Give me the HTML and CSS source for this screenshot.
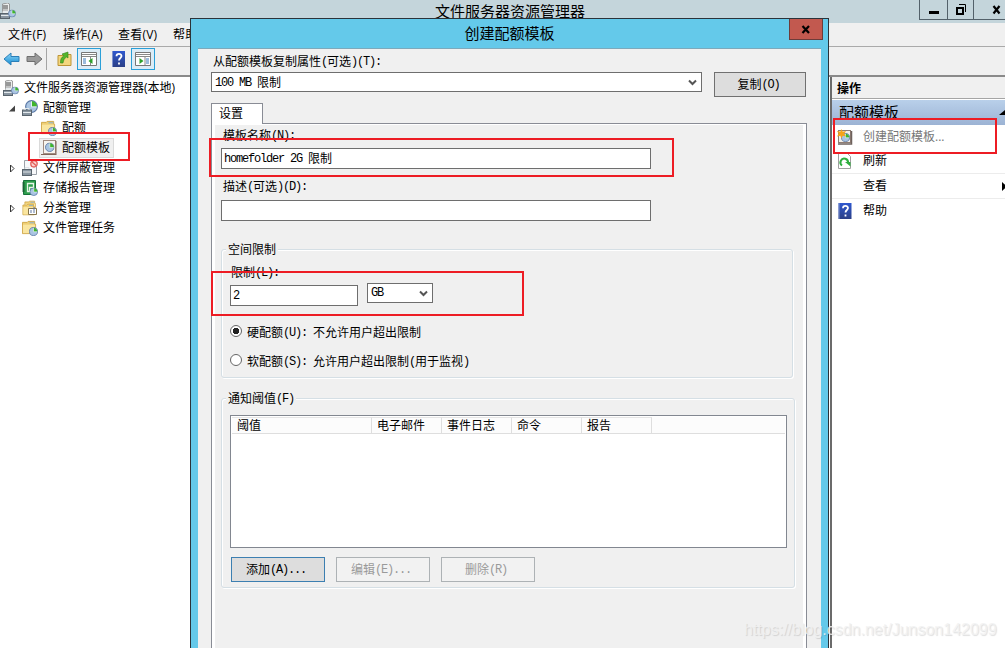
FILE: index.html
```html
<!DOCTYPE html>
<html lang="zh-CN">
<head>
    <meta charset="UTF-8">
    <title>文件服务器资源管理器</title>
    <link rel="stylesheet" href="styles.css">
</head>
<body>
    <svg class="sprites" width="0" height="0">
        <defs>
            <linearGradient id="gBlue" x1="0" y1="0" x2="0" y2="1"><stop offset="0" stop-color="#8fd6f7"/><stop offset="1" stop-color="#138bd2"/></linearGradient>
            <linearGradient id="gHelp" x1="0" y1="0" x2="0" y2="1"><stop offset="0" stop-color="#2f58cf"/><stop offset="1" stop-color="#2b3f86"/></linearGradient>
            <symbol id="pie" viewBox="0 0 10 10">
                <circle cx="5" cy="5" r="4.5" fill="#a9c4e2" stroke="#5a78a5" stroke-width=".9"/>
                <path d="M5 5.200V.8A4.200 4.200 0 0 1 9.200 5.200z" fill="#3fb52c"/>
                <path d="M5 1v4.300h4" stroke="#eef6fc" stroke-width=".7" fill="none"/>
            </symbol>
            <symbol id="server" viewBox="0 0 16 16">
                <path d="M2.500 1l5-1 2 1v10h-7z" fill="#eceeee" stroke="#888" stroke-width=".8"/>
                <path d="M3 3h5M3 5h5" stroke="#444"/>
                <path d="M3 7h5" stroke="#999"/>
                <rect x=".5" y="10.500" width="9" height="5" fill="#8a96a1" stroke="#59646d"/>
                <path d="M3 10V8.500h4V10M1 12.500h8" stroke="#e4eaed" fill="none"/>
                <use href="#pie" x="8" y="6.500" width="8" height="8"/>
            </symbol>
            <symbol id="quota" viewBox="0 0 16 16">
                <use href="#pie" x="3" y="0" width="13" height="13"/>
                <rect x=".5" y="10" width="9" height="5.500" fill="#8a96a1" stroke="#59646d"/>
                <path d="M3 10V8.500h4V10M1 12.500h8" stroke="#e4eaed" fill="none"/>
            </symbol>
            <symbol id="folder" viewBox="0 0 16 16">
                <path d="M.5 2.500h5l1-1h7v3h1v10H.5z" fill="#efcf74" stroke="#cfa649"/>
                <path d="M8 3h5" stroke="#7eaed8"/>
                <path d="M1 5h13v9H1z" fill="#fae6a0"/>
            </symbol>
            <symbol id="folderpie" viewBox="0 0 16 16">
                <use href="#folder" width="15" height="15"/>
                <use href="#pie" x="7" y="7" width="9" height="9"/>
            </symbol>
            <symbol id="template" viewBox="0 0 16 16">
                <rect x="2.500" y=".5" width="12" height="13" fill="#f7f4ef" stroke="#a18c82"/>
                <path d="M0 14.500h15M15 1v14" stroke="#80665a" fill="none"/>
                <use href="#pie" x="4" y="2.500" width="9.500" height="9.500"/>
            </symbol>
            <symbol id="screen" viewBox="0 0 16 16">
                <path d="M2.500.5h9l3 3v11h-12z" fill="#f7f8fa" stroke="#9ba1a8"/>
                <rect x=".5" y="9.500" width="9" height="6" fill="#8a96a1" stroke="#59646d"/>
                <path d="M3 9V7.500h4V9M1 12h8" stroke="#dde3e6" fill="none"/>
                <circle cx="12" cy="3.800" r="3.200" fill="#f9d4d1" stroke="#e2605b" stroke-width="1.300"/>
                <path d="M9.700 1.800l4.600 4" stroke="#e2605b" stroke-width="1.300"/>
            </symbol>
            <symbol id="report" viewBox="0 0 16 16">
                <path d="M1.500.5h12v14h-12z" fill="#2f9f4e" stroke="#17733a"/>
                <path d="M0 3h3M0 5h3M0 7h3M0 9h3M0 11h3" stroke="#174f2b" stroke-width=".8"/>
                <path d="M5.500 3.500h6v4h-4v4h-2z" fill="none" stroke="#e8f6e8" stroke-width="1.300"/>
                <use href="#pie" x="7.500" y="7.500" width="8.500" height="8.500"/>
            </symbol>
            <symbol id="classes" viewBox="0 0 16 16">
                <use href="#folder" x="2" y="0" width="13" height="12"/>
                <use href="#folder" x="0" y="3" width="14" height="13"/>
                <path d="M6.500 8.500h8v6h-8z" fill="#fff" stroke="#85754d"/>
                <path d="M9 10v3M12 7v6" stroke="#5e79a3"/>
            </symbol>
            <symbol id="create" viewBox="0 0 16 16">
                <rect x="1.500" y="1.500" width="12" height="12" fill="#f2eee8" stroke="#8f7d73"/>
                <path d="M1 15h13.500V2" stroke="#6e625d" stroke-width="1.500" fill="none"/>
                <use href="#pie" x="4" y="4" width="9" height="9"/>
                <path d="M4.500 0l1.200 2.800L9 2 7.300 4.700 9 7.500 5.700 6.800 4.500 9.500 3.300 6.800 0 7.500l1.700-2.800L0 2l3.300.8z" fill="#f5a31a"/>
            </symbol>
            <symbol id="refresh" viewBox="0 0 16 16">
                <path d="M1.500.5h9l3 3v12h-12z" fill="#fff" stroke="#a0a0a0"/>
                <path d="M5 12.500A3.800 3.800 0 1 1 11 10" stroke="#2fae3f" stroke-width="2" fill="none"/>
                <path d="M8 9h5.500v4.500z" fill="#2fae3f"/>
            </symbol>
        </defs>
    </svg>

    <div class="window">
        <header class="titlebar">
            <svg class="app-icon"><use href="#server"/></svg>
            <span class="title">文件服务器资源管理器</span>
            <div class="win-buttons">
                <span><svg width="12" height="12"><path d="M1 8.500h10" stroke="#000" stroke-width="3"/></svg></span>
                <span><svg width="12" height="12"><path d="M2 4h6v6H2z" stroke="#000" stroke-width="2" fill="none"/><path d="M4 .5h6.500V8" stroke="#000" fill="none"/></svg></span>
                <span><svg width="10" height="10"><path d="M1.500 1l6 7.500M7.500 1l-6 7.500" stroke="#000" stroke-width="2.200"/></svg></span>
            </div>
        </header>
        <nav class="menu">
            <span>文件(F)</span><span>操作(A)</span><span>查看(V)</span><span>帮助(H)</span>
        </nav>
        <div class="toolbar">
            <svg width="17" height="16"><path d="M1 8l7-6v3.500h8v5H8V14z" fill="url(#gBlue)" stroke="#2b7fb8"/></svg>
            <svg class="fwd" width="17" height="16"><path d="M16 8L9 2v3.500H1v5h8V14z" fill="#999" stroke="#6f6f6f"/></svg>
            <i class="sep"></i>
            <svg class="up" width="16" height="16"><path d="M1 4.500h5l1-1h7v11H1z" fill="#f3d67e" stroke="#bd9437"/><path d="M3.500 12c0-5 1.500-6 3.500-7L5 3l6-2v6L9.500 6C7.500 7 6.500 9 6 12z" fill="#54b52b" stroke="#348519" stroke-width=".6"/></svg>
            <span class="tool-on">
                <svg width="16" height="14"><path d="M.5.5h15v13H.5z" fill="#fff" stroke="#777"/><path d="M1 2.500h14M1 4.500h14M9.500 5v8" stroke="#888"/><path d="M2 7h3M2 9h3M2 11h3" stroke="#3679ba"/><path d="M11.500 6v6L7.500 9z" fill="#2da22c"/></svg>
            </span>
            <svg class="help" width="13" height="16"><path d="M0 0h13v16H0z" fill="url(#gHelp)"/><path d="M.5 0v16" stroke="#8093cc"/><path d="M4.500 5.200c0-3 5-3 5-.2 0 2-2.500 2-2.500 4.500M7 11.500v2" stroke="#fff" stroke-width="1.800" fill="none"/></svg>
            <span class="tool-on">
                <svg width="16" height="14"><path d="M.5.5h15v13H.5z" fill="#fff" stroke="#777"/><path d="M1 2.500h14M1 4.500h14M10 5v8" stroke="#888"/><path d="M11 7h3M11 9h3M11 11h3" stroke="#3679ba"/><path d="M4.500 6v6l4-3z" fill="#2da22c"/></svg>
            </span>
        </div>

        <main class="panes">
            <div class="tree">
                <div class="node root"><svg class="ico"><use href="#server"/></svg><span>文件服务器资源管理器(本地)</span></div>
                <div class="node"><svg class="arrow" viewBox="0 0 8 8"><path d="M7 1v6H1z" fill="#444"/></svg><svg class="ico"><use href="#quota"/></svg><span>配额管理</span></div>
                <div class="node sub"><svg class="ico"><use href="#folderpie"/></svg><span>配额</span></div>
                <div class="node sub selected"><svg class="ico"><use href="#template"/></svg><span>配额模板</span></div>
                <div class="node"><svg class="arrow" viewBox="0 0 8 8"><path d="M2.500.5v7L6 4z" fill="none" stroke="#333"/></svg><svg class="ico"><use href="#screen"/></svg><span>文件屏蔽管理</span></div>
                <div class="node"><i class="arrow"></i><svg class="ico"><use href="#report"/></svg><span>存储报告管理</span></div>
                <div class="node"><svg class="arrow" viewBox="0 0 8 8"><path d="M2.500.5v7L6 4z" fill="none" stroke="#333"/></svg><svg class="ico"><use href="#classes"/></svg><span>分类管理</span></div>
                <div class="node"><i class="arrow"></i><svg class="ico"><use href="#folderpie"/></svg><span>文件管理任务</span></div>
            </div>

            <aside class="actions">
                <div class="actions-head">操作</div>
                <div class="actions-group"><span>配额模板</span><svg width="6" height="6"><path d="M6 0v5H0z"/></svg></div>
                <div class="action disabled"><svg class="ico"><use href="#create"/></svg><span>创建配额模板...</span></div>
                <div class="action"><svg class="ico"><use href="#refresh"/></svg><span>刷新</span></div>
                <div class="action lined"><i class="ico"></i><span>查看</span><svg class="more" width="3" height="9"><path d="M0 0l5 4.500L0 9z"/></svg></div>
                <div class="action lined"><svg class="ico" viewBox="0 0 13 16"><path d="M0 0h13v16H0z" fill="url(#gHelp)"/><path d="M.5 0v16" stroke="#8093cc"/><path d="M4.500 5.200c0-3 5-3 5-.2 0 2-2.500 2-2.500 4.500M7 11.500v2" stroke="#fff" stroke-width="1.800" fill="none"/></svg><span>帮助</span></div>
            </aside>
        </main>
    </div>

    <section class="dialog">
        <div class="dialog-title">
            <span>创建配额模板</span>
            <div class="close"><svg width="10" height="9"><path d="M1.500 1l6.500 7M8 1L1.500 8" stroke="#000" stroke-width="2.200"/></svg></div>
        </div>
        <div class="dialog-body">
            <div class="copy-label">从配额模板复制属性<b>(</b>可选<b>)(T):</b></div>
            <div class="copy-row">
                <div class="select wide"><span><b>100 MB </b>限制</span><svg width="9" height="7"><path d="M1 1.500L4.500 5 8 1.500" stroke="#555" stroke-width="2" fill="none"/></svg></div>
                <div class="btn">复制<b>(O)</b></div>
            </div>
            <div class="tab">设置</div>
            <div class="tab-panel">
                <div class="page">
                    <div class="label name">模板名称<b>(N):</b></div>
                    <div class="field"><b>homefolder 2G </b>限制</div>
                    <div class="label desc">描述<b>(</b>可选<b>)(D):</b></div>
                    <div class="field"></div>

                    <fieldset class="space">
                        <legend>空间限制</legend>
                        <div class="limit-label">限制<b>(L):</b></div>
                        <div class="limit-row">
                            <div class="field size"><b>2</b></div>
                            <div class="select unit"><b>GB</b><svg width="9" height="7"><path d="M1 1.500L4.500 5 8 1.500" stroke="#555" stroke-width="2" fill="none"/></svg></div>
                        </div>
                        <div class="radio-row first"><i class="radio on"></i><span>硬配额<b>(U): </b>不允许用户超出限制</span></div>
                        <div class="radio-row"><i class="radio"></i><span>软配额<b>(S): </b>允许用户超出限制<b>(</b>用于监视<b>)</b></span></div>
                    </fieldset>

                    <fieldset class="notify">
                        <legend>通知阈值<b>(F)</b></legend>
                        <div class="list">
                            <div class="list-head">
                                <span class="first">阈值</span><span>电子邮件</span><span>事件日志</span><span>命令</span><span>报告</span>
                            </div>
                        </div>
                        <div class="btn-row">
                            <div class="btn default">添加<b>(A)...</b></div>
                            <div class="btn off">编辑<b>(E)...</b></div>
                            <div class="btn off">删除<b>(R)</b></div>
                        </div>
                    </fieldset>
                </div>
            </div>
        </div>
    </section>

    <div class="mark mark-tree"></div>
    <div class="mark mark-name"></div>
    <div class="mark mark-limit"></div>
    <div class="mark mark-action"></div>
    <div class="watermark">https://blog.csdn.net/Junson142099</div>
</body>
</html>
```
FILE: styles.css
```css
* {
    margin: 0;
    padding: 0;
    box-sizing: border-box;
}

body {
    position: relative;
    width: 1005px;
    height: 648px;
    overflow: hidden;
    background: #fff;
    color: #000;
    font-family: "Open Sans", "Noto Sans CJK SC", sans-serif;
    font-size: 12px;
}

svg {
    display: block;
    flex: none;
}

.sprites {
    position: absolute;
}

/* main window */
.window {
    height: 648px;
    display: flex;
    flex-direction: column;
}

.titlebar {
    height: 23px;
    background: #c4d5db;
    display: flex;
    align-items: flex-start;
}

.app-icon {
    width: 16px;
    height: 16px;
    margin-top: 3px;
}

.title {
    margin-left: 419px;
    font-size: 15px;
    line-height: 23px;
    white-space: nowrap;
}

.win-buttons {
    margin-left: auto;
    width: 86px;
    height: 20px;
    display: flex;
    overflow: hidden;
    border: 1px solid #53616a;
    border-width: 0 0 1px 1px;
}

.win-buttons span {
    flex: none;
    width: 28px;
    display: flex;
    align-items: center;
    justify-content: center;
    border-right: 1px solid #53616a;
}

.win-buttons span:nth-child(2) {
    width: 26px;
}

.win-buttons span:nth-child(3) {
    width: 46px;
    border-right: 0;
}

.menu {
    height: 24px;
    display: flex;
    padding-left: 8px;
    background: #f0f0f0;
    border-bottom: 1px solid #aaa;
    line-height: 24px;
}

.menu span {
    width: 55px;
    letter-spacing: 0.2px;
}

.toolbar {
    height: 30px;
    display: flex;
    align-items: center;
    padding: 0 0 5px 3px;
    background: #f0f0f0;
    border-bottom: 2px solid #8a8a8a;
}

.toolbar .fwd {
    margin-left: 6px;
}

.toolbar .sep {
    width: 1px;
    height: 22px;
    margin-left: 3px;
    background: #a5a5a5;
}

.toolbar .up {
    margin-left: 10px;
}

.tool-on {
    width: 24px;
    height: 22px;
    margin-left: 4px;
    display: flex;
    align-items: center;
    justify-content: center;
    background: #dcecf6;
    border: 1px solid #2a9fd8;
}

.toolbar .help {
    margin-left: 11px;
}

.help + .tool-on {
    margin-left: 6px;
}

.panes {
    flex: 1;
    display: flex;
    justify-content: space-between;
}

.tree {
    width: 190px;
    padding-top: 1px;
}

.node {
    height: 20px;
    display: flex;
    align-items: center;
    padding-left: 8px;
    line-height: 20px;
    white-space: nowrap;
}

.node .ico {
    width: 16px;
    height: 16px;
    margin-right: 5px;
}

.node .arrow {
    width: 8px;
    height: 9px;
    margin-right: 6px;
}

.node.root {
    padding-left: 3px;
}

.node.sub {
    padding-left: 41px;
}

.node.selected {
    margin-left: 39px;
    padding-left: 2px;
    width: 75px;
    background: #f0f0f0;
    border: 1px solid #dadada;
}

.node.selected .ico {
    margin-left: -1px;
}

.actions {
    width: 175px;
    border-left: 2px solid #6b6b6b;
}

.actions-head {
    height: 22px;
    padding-left: 5px;
    background: #f0f0f0;
    border-bottom: 1px solid #a5a5a5;
    font-weight: bold;
    line-height: 23px;
}

.actions-group {
    height: 25px;
    margin-top: 1px;
    display: flex;
    align-items: center;
    justify-content: space-between;
    padding-left: 7px;
    background: linear-gradient(#b9d0ea, #9cb3d4);
    font-size: 15px;
    line-height: 25px;
}

.action {
    height: 25px;
    display: flex;
    align-items: center;
    padding-left: 6px;
    line-height: 24px;
}

.action .ico {
    width: 16px;
    height: 16px;
    margin-left: -1px;
    margin-right: 10px;
}

.action.disabled {
    height: 23px;
    color: #777;
}

.action.lined {
    border-top: 1px solid #ececec;
}

.action .more {
    margin-left: auto;
}

/* dialog */
.dialog {
    position: absolute;
    left: 190px;
    top: 18px;
    width: 639px;
    height: 630px;
    padding: 0 7px;
    background: #64c9ea;
    border: 1px solid #2b333a;
    border-bottom: 0;
    font-family: "Noto Sans CJK SC", sans-serif;
}

.dialog b {
    display: inline-block;
    font-family: "Liberation Mono", monospace;
    font-size: 12px;
    font-weight: normal;
    letter-spacing: -1.2px;
    line-height: 12px;
    vertical-align: 1px;
    white-space: pre;
}

.dialog-title {
    position: relative;
    height: 30px;
    border-bottom: 1px solid #7ea9bb;
    font-size: 15px;
    line-height: 28px;
    text-align: center;
}

.close {
    position: absolute;
    right: -2px;
    top: 0;
    width: 34px;
    height: 21px;
    display: flex;
    align-items: center;
    justify-content: center;
    background: #c2594f;
    border: 1px solid #6d3c3a;
    border-top: 0;
}

.dialog-body {
    height: 599px;
    padding-left: 13px;
    background: #f0f0f0;
}

.copy-label {
    height: 23px;
    padding-left: 2px;
    line-height: 23px;
}

.copy-row {
    display: flex;
    align-items: flex-start;
    gap: 12px;
}

.select {
    display: flex;
    align-items: center;
    justify-content: space-between;
    height: 20px;
    padding: 0 4px 0 3px;
    background: #fff;
    border: 1px solid #6e6e6e;
    line-height: 18px;
}

.select.wide {
    width: 491px;
}

.select.unit {
    width: 66px;
    margin-left: 9px;
}

.btn {
    width: 94px;
    height: 25px;
    background: #ddd;
    border: 1px solid #707070;
    line-height: 22px;
    text-align: center;
}

.copy-row .btn {
    width: 92px;
    padding-right: 3px;
}

.btn-row .btn {
    padding-right: 4px;
}

.btn.default {
    border-color: #3c7fb1;
}

.btn.off {
    color: #9a9a9a;
    background: #f2f2f2;
    border-color: #adb2b5;
}

.tab {
    position: relative;
    width: 52px;
    height: 21px;
    margin-top: 6px;
    margin-bottom: -1px;
    padding-left: 7px;
    background: #fff;
    border: 1px solid #898c95;
    border-bottom: 0;
    line-height: 18px;
}

.tab-panel {
    width: 596px;
    height: 525px;
    padding: 1px 3px 0;
    background: #fff;
    border: 1px solid #898c95;
    border-bottom: 0;
}

.page {
    height: 100%;
    padding-left: 6px;
    background: #f0f0f0;
}

.label {
    padding-left: 2px;
    line-height: 19px;
}

.label.name {
    height: 23px;
}

.label.desc {
    height: 31px;
    padding-top: 7px;
}

.field {
    width: 430px;
    height: 21px;
    padding-left: 2px;
    background: #fff;
    border: 1px solid #6e6e6e;
    line-height: 17px;
}

.field.size {
    width: 128px;
    margin-top: 2px;
}

fieldset {
    min-width: 0;
    padding-left: 8px;
    border: 1px solid #d5dfe5;
    border-radius: 3px;
    box-shadow: 1px 1px 0 #fff, inset 1px 1px 0 #fff;
}

legend {
    height: 13px;
    margin-left: -4px;
    padding: 0 2px;
    background: #f0f0f0;
    line-height: 12px;
}

.space {
    width: 572px;
    height: 135px;
    margin-top: 22px;
}

.limit-label {
    height: 27px;
    padding: 6px 0 0 1px;
    line-height: 20px;
}

.limit-row {
    display: flex;
    align-items: flex-start;
}

.radio-row {
    height: 29px;
    display: flex;
    align-items: center;
    gap: 5px;
}

.radio-row.first {
    margin-top: 11px;
}

.radio {
    width: 12px;
    height: 12px;
    margin-top: -1px;
    background: #fff;
    border: 1px solid #666;
    border-radius: 50%;
}

.radio.on {
    background: radial-gradient(circle, #222 3px, #fff 3.5px);
}

.notify {
    width: 574px;
    height: 196px;
    margin-top: 14px;
}

.list {
    width: 557px;
    height: 133px;
    margin-top: 10px;
    padding: 1px;
    background: #fff;
    border: 1px solid #828790;
}

.list-head {
    height: 17px;
    display: flex;
    background: #fcfcfc;
    border-bottom: 1px solid #dedede;
}

.list-head span {
    width: 70px;
    padding-left: 5px;
    border-top: 1px solid #e5e5e5;
    border-right: 1px solid #dedede;
    line-height: 14px;
}

.list-head .first {
    width: 140px;
}

.btn-row {
    display: flex;
    gap: 11px;
    margin: 9px 0 0 1px;
}

/* red highlight frames */
.mark {
    position: absolute;
    border: 2px solid #ed1c24;
}

.mark-tree {
    left: 28px;
    top: 132px;
    width: 102px;
    height: 29px;
}

.mark-name {
    left: 209px;
    top: 138px;
    width: 465px;
    height: 39px;
}

.mark-limit {
    left: 211px;
    top: 271px;
    width: 313px;
    height: 45px;
}

.mark-action {
    left: 833px;
    top: 118px;
    width: 164px;
    height: 36px;
}

.watermark {
    position: absolute;
    left: 744px;
    top: 620px;
    color: rgba(242, 242, 242, 0.85);
    font-family: "Liberation Sans", sans-serif;
    font-size: 16px;
    line-height: 20px;
    text-shadow: 1px 1px 1px rgba(0, 0, 0, 0.13);
}
```
